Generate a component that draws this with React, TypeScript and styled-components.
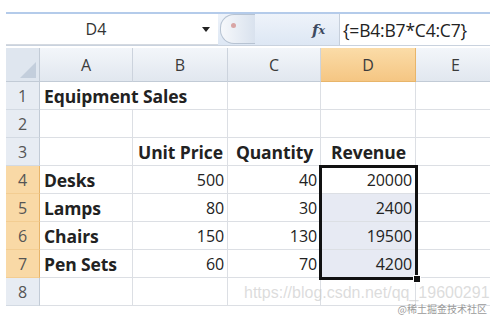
import React from "react";
import styled, { createGlobalStyle } from "styled-components";

const GlobalStyle = createGlobalStyle`
  html, body {
    margin: 0;
    padding: 0;
    background: #ffffff;
  }
  body {
    font-family: "Open Sans", Lato, "Noto Sans", sans-serif;
    color: #262626;
  }
`;

const Page = styled.div`
  position: relative;
  width: 490px;
  height: 316px;
  overflow: hidden;
  padding: 12px 0 0 6px;
  box-sizing: border-box;
`;

const FormulaBar = styled.div`
  display: flex;
  height: 31px;
  border-top: 2px solid #b4cbea;
  border-bottom: 1px solid #c9d2de;
  background: linear-gradient(#eef3fa, #dde7f4);
`;

const NameBox = styled.div`
  display: flex;
  align-items: center;
  width: 212px;
  background: #ffffff;
  border-bottom: 1px solid #d4d9e0;
  font-size: 16px;
  color: #333;
  padding: 0 8px 0 0;
  box-sizing: border-box;

  span {
    flex: 1;
    text-align: center;
    padding-right: 16px;
  }
`;

const Caret = styled.div`
  width: 0;
  height: 0;
  border-left: 4px solid transparent;
  border-right: 4px solid transparent;
  border-top: 5px solid #222;
`;

const Pill = styled.div`
  position: relative;
  width: 34px;
  height: 28px;
  margin-left: 2px;
  border-radius: 14px 0 0 14px;
  border: 1px solid #b7c3d2;
  border-right: none;
  background: linear-gradient(90deg, #f6f8fb, #d9e2ee);

  &::after {
    content: "";
    position: absolute;
    left: 10px;
    top: 8px;
    width: 5px;
    height: 5px;
    border-radius: 50%;
    background: #d8a5a5;
  }
`;

const FxArea = styled.div`
  display: flex;
  align-items: center;
  justify-content: flex-end;
  width: 84px;
  padding-right: 14px;
  box-sizing: border-box;
  font-family: "DejaVu Serif", "Liberation Serif", serif;
  font-style: italic;
  font-weight: bold;
  font-size: 15px;
  color: #3d4a60;

  sub {
    font-size: 11px;
    vertical-align: baseline;
    position: relative;
    top: 1px;
  }
`;

const FormulaInput = styled.div`
  flex: 1;
  display: flex;
  align-items: center;
  padding-left: 3px;
  background: #ffffff;
  border-left: 1px solid #c6cfdb;
  font-size: 17.5px;
  letter-spacing: -0.2px;
  color: #222;
`;

const Sheet = styled.div`
  display: grid;
  grid-template-columns: 34px 93px 95px 93px 95px 80px;
  grid-template-rows: 34px repeat(8, 28px);
  margin-top: 2px;
  position: relative;
`;

const Corner = styled.div`
  background: #dfe6ef;
  border-right: 1px solid #c2cbd6;
  border-bottom: 1px solid #c2cbd6;
  position: relative;

  &::after {
    content: "";
    position: absolute;
    right: 3px;
    bottom: 3px;
    width: 0;
    height: 0;
    border-left: 16px solid transparent;
    border-bottom: 16px solid #c3cedc;
  }
`;

const ColHead = styled.div<{ $active?: boolean }>`
  display: flex;
  align-items: center;
  justify-content: center;
  font-size: 16px;
  color: #3b3b3b;
  background: ${(p) =>
    p.$active
      ? "linear-gradient(#fbdca8, #f5c683)"
      : "linear-gradient(#f3f6fa, #e1e7ef)"};
  border-right: 1px solid ${(p) => (p.$active ? "#e8b56a" : "#ccd3dd")};
  border-bottom: 1px solid ${(p) => (p.$active ? "#e8b56a" : "#c2cbd6")};
`;

const RowHead = styled.div<{ $active?: boolean }>`
  display: flex;
  align-items: center;
  justify-content: center;
  font-size: 16px;
  color: #555;
  background: ${(p) => (p.$active ? "#f9d9a6" : "#e7ecf3")};
  border-right: 1px solid ${(p) => (p.$active ? "#e8b56a" : "#c2cbd6")};
  border-bottom: 1px solid ${(p) => (p.$active ? "#f3cd92" : "#d3dae3")};
`;

const Cell = styled.div<{
  $align?: "left" | "right" | "center";
  $bold?: boolean;
  $num?: boolean;
  $shade?: boolean;
  $span?: number;
}>`
  display: flex;
  align-items: center;
  justify-content: ${(p) =>
    p.$align === "right" ? "flex-end" : p.$align === "center" ? "center" : "flex-start"};
  grid-column: span ${(p) => p.$span ?? 1};
  padding: 0 3px 0 4px;
  box-sizing: border-box;
  white-space: nowrap;
  font-size: ${(p) => (p.$num ? "16px" : "17.5px")};
  font-weight: ${(p) => (p.$bold ? 700 : 400)};
  letter-spacing: -0.1px;
  color: #222;
  background: ${(p) => (p.$shade ? "#e7eaf3" : "#ffffff")};
  border-right: 1px solid #dcdfe4;
  border-bottom: 1px solid #dcdfe4;
`;

const Selection = styled.div`
  position: absolute;
  left: 313px;
  top: 117px;
  width: 99px;
  height: 115px;
  border: 3px solid #111;
  box-sizing: border-box;
  pointer-events: none;

  &::after {
    content: "";
    position: absolute;
    right: -6px;
    bottom: -6px;
    width: 6px;
    height: 6px;
    background: #111;
    border: 1px solid #fff;
  }
`;

const Watermark = styled.div`
  position: absolute;
  left: 244px;
  top: 284px;
  font-family: "Liberation Sans", Arial, sans-serif;
  font-size: 16px;
  color: rgba(205, 205, 205, 0.7);
  white-space: nowrap;
`;

const Badge = styled.div`
  position: absolute;
  right: 3px;
  top: 301px;
  font-family: "Noto Sans CJK SC", sans-serif;
  font-size: 10px;
  color: #9a9a9a;
  white-space: nowrap;
`;

type Row = { a?: string; b?: string; c?: string; d?: string; header?: boolean };

const rows: Row[] = [
  { a: "Equipment Sales" },
  {},
  { b: "Unit Price", c: "Quantity", d: "Revenue", header: true },
  { a: "Desks", b: "500", c: "40", d: "20000" },
  { a: "Lamps", b: "80", c: "30", d: "2400" },
  { a: "Chairs", b: "150", c: "130", d: "19500" },
  { a: "Pen Sets", b: "60", c: "70", d: "4200" },
  {},
];

export default function App() {
  return (
    <Page>
      <GlobalStyle />
      <FormulaBar>
        <NameBox>
          <span>D4</span>
          <Caret />
        </NameBox>
        <Pill />
        <FxArea>
          f<sub>x</sub>
        </FxArea>
        <FormulaInput>{"{=B4:B7*C4:C7}"}</FormulaInput>
      </FormulaBar>
      <Sheet>
        <Corner />
        {["A", "B", "C", "D", "E"].map((c) => (
          <ColHead key={c} $active={c === "D"}>
            {c}
          </ColHead>
        ))}
        {rows.map((r, i) => {
          const n = i + 1;
          const sel = n >= 4 && n <= 7;
          const align = r.header ? "center" : "right";
          const num = !r.header;
          const wide = n === 1;
          return (
            <React.Fragment key={n}>
              <RowHead $active={sel}>{n}</RowHead>
              <Cell $bold $span={wide ? 2 : 1}>
                {r.a}
              </Cell>
              {!wide && (
                <Cell $align={align} $bold={r.header} $num={num}>
                  {r.b}
                </Cell>
              )}
              <Cell $align={align} $bold={r.header} $num={num}>
                {r.c}
              </Cell>
              <Cell $align={align} $bold={r.header} $num={num} $shade={n >= 5 && n <= 7}>
                {r.d}
              </Cell>
              <Cell />
            </React.Fragment>
          );
        })}
        <Selection />
      </Sheet>
      <Watermark>https://blog.csdn.net/qq_19600291</Watermark>
      <Badge>@稀土掘金技术社区</Badge>
    </Page>
  );
}
